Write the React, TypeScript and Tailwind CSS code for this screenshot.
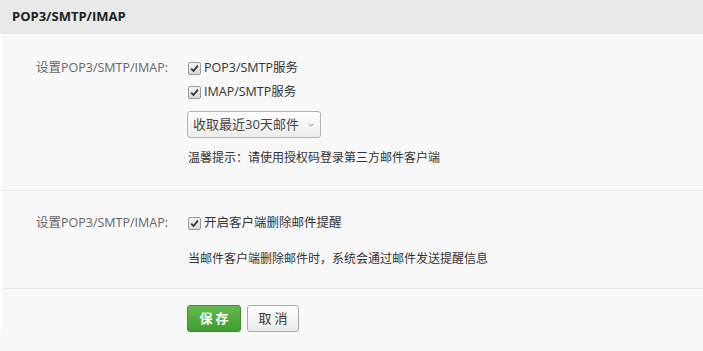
import React from "react";

const font = { fontFamily: '"Open Sans", "Noto Sans CJK SC", sans-serif' };

function Check({ label }: { label: string }) {
  return (
    <label className="flex items-center h-6 text-[12.5px] text-[#333]">
      <span className="w-[13px] h-[13px] rounded-[2px] border border-[#9a9a9a] bg-gradient-to-b from-[#f4f4f4] to-[#d8d8d8] flex items-center justify-center mr-[3px]">
        <svg width="9" height="9" viewBox="0 0 9 9">
          <path d="M1.2 4.6 L3.5 7 L7.9 1.6" fill="none" stroke="#333" strokeWidth="1.8" />
        </svg>
      </span>
      {label}
    </label>
  );
}

function Row({ children }: { children: React.ReactNode }) {
  return (
    <div className="flex">
      <div className="w-[166px] shrink-0 h-6 flex items-center justify-end text-[12.5px] text-[#666]">
        设置POP3/SMTP/IMAP:
      </div>
      <div className="pl-[20px] flex flex-col">{children}</div>
    </div>
  );
}

export default function App() {
  return (
    <div className="w-[703px] h-[351px] bg-[#f8f8f8] overflow-hidden" style={font}>
      <div className="h-[34px] bg-[#e8e8e8] pl-3 flex items-center text-[13px] font-bold text-[#222]">
        POP3/SMTP/IMAP
      </div>
      <div className="border-l-2 border-white">
        <div className="pt-[22px] pb-[22px] border-b border-[#e6e6e6]">
          <Row>
            <Check label="POP3/SMTP服务" />
            <Check label="IMAP/SMTP服务" />
            <button className="-ml-[1px] mt-[7px] w-[134px] h-[27px] rounded-[3px] border border-[#b5b5b5] bg-gradient-to-b from-[#ffffff] to-[#ececec] text-[13px] text-[#444] flex items-center justify-center gap-[8px]">
              收取最近30天邮件
              <svg width="8" height="6" viewBox="0 0 8 6">
                <path d="M1.5 1.8 L4 4.2 L6.5 1.8" fill="none" stroke="#888" strokeWidth="1" />
              </svg>
            </button>
            <p className="mt-[10px] leading-5 text-[12px] text-[#333]">
              温馨提示：请使用授权码登录第三方邮件客户端
            </p>
          </Row>
        </div>
        <div className="pt-[20px] pb-[19px] border-b border-[#e6e6e6]">
          <Row>
            <Check label="开启客户端删除邮件提醒" />
            <p className="mt-[14px] leading-5 text-[12px] text-[#333]">
              当邮件客户端删除邮件时，系统会通过邮件发送提醒信息
            </p>
          </Row>
        </div>
        <div className="pt-[16px] pl-[185px] flex gap-[6px]">
          <button className="w-[54px] h-[27px] rounded-[3px] border border-[#3d8f2d] bg-gradient-to-b from-[#62bb4f] to-[#3f9c2f] text-white text-[13px] font-bold tracking-[3px] pl-[3px]">
            保存
          </button>
          <button className="w-[52px] h-[27px] rounded-[3px] border border-[#a8a8a8] bg-gradient-to-b from-[#ffffff] to-[#e9e9e9] text-[#333] text-[13px] tracking-[3px] pl-[3px]">
            取消
          </button>
        </div>
      </div>
    </div>
  );
}
